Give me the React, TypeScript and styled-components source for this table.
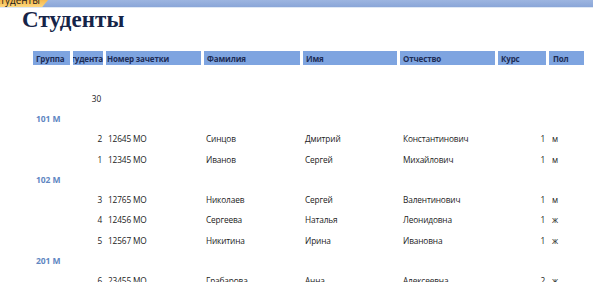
import React from "react";
import styled, { createGlobalStyle } from "styled-components";

const Global = createGlobalStyle`
  html, body { margin: 0; padding: 0; background: #ffffff; }
  body { font-family: "Open Sans", "Noto Sans", sans-serif; }
`;

const Page = styled.div`
  width: 593px;
  height: 282px;
  overflow: hidden;
  background: #ffffff;
  display: flex;
  flex-direction: column;
  & > * { flex-shrink: 0; }
`;

const TabStrip = styled.div`
  display: flex;
  height: 7px;
  background: linear-gradient(#9db5e0, #8aa6d8);
  border-bottom: 1px solid #dfe8f5;
`;

const Tab = styled.div`
  width: 48px;
  height: 7px;
  background: linear-gradient(#f7b84b, #fcd77e);
  clip-path: polygon(0 0, 100% 0, 88% 100%, 0 100%);
  display: flex;
  align-items: flex-end;
  justify-content: flex-end;
  overflow: hidden;
  padding-right: 8px;
  box-sizing: border-box;
`;

const TabText = styled.span`
  font-family: "Open Sans", sans-serif;
  font-size: 10px;
  line-height: 10px;
  color: #1b1b1b;
  white-space: nowrap;
  margin-bottom: 2px;
`;

const Title = styled.h1`
  margin: 0;
  padding: 1px 0 0 22px;
  font-family: "Liberation Serif", serif;
  font-weight: 700;
  font-size: 23px;
  line-height: 22px;
  color: #162448;
  letter-spacing: 0.1px;
`;

const Grid = styled.div`
  display: grid;
  grid-template-columns: 37px 30px 95px 96px 94px 95px 48px 35px;
  column-gap: 3px;
  padding-left: 33px;
`;

const HeaderRow = styled(Grid)`
  margin-top: 20px;
  height: 14px;
`;

const HeadCell = styled.div<{ $right?: boolean; $pad?: number }>`
  background: #7ea4e0;
  height: 14px;
  display: flex;
  align-items: center;
  justify-content: ${(p) => (p.$right ? "flex-end" : "flex-start")};
  overflow: hidden;
  padding-left: ${(p) => p.$pad ?? 3}px;
  box-sizing: border-box;
  font-size: 8px;
  font-weight: 700;
  color: #1d2c55;
  white-space: nowrap;
  letter-spacing: -0.15px;
`;

const Row = styled(Grid)`
  height: 20.3px;
  align-items: center;
`;

const Spacer = styled.div`
  height: 23px;
`;

const Cell = styled.div<{ $right?: boolean; $pad?: number }>`
  font-size: 8.3px;
  color: #222222;
  white-space: nowrap;
  letter-spacing: -0.15px;
  text-align: ${(p) => (p.$right ? "right" : "left")};
  padding-left: ${(p) => (p.$right ? 0 : p.$pad ?? 2)}px;
  padding-right: ${(p) => (p.$right ? p.$pad ?? 1 : 0)}px;
`;

const GroupLabel = styled.div`
  grid-column: 1 / span 3;
  padding-left: 3px;
  font-size: 8.5px;
  font-weight: 700;
  color: #6187c2;
  letter-spacing: -0.1px;
`;

type Student = {
  id: number;
  num: string;
  last: string;
  first: string;
  middle: string;
  course: number;
  sex: string;
};

const groups: { name: string; students: Student[] }[] = [
  {
    name: "101 М",
    students: [
      { id: 2, num: "12645 МО", last: "Синцов", first: "Дмитрий", middle: "Константинович", course: 1, sex: "м" },
      { id: 1, num: "12345 МО", last: "Иванов", first: "Сергей", middle: "Михайлович", course: 1, sex: "м" },
    ],
  },
  {
    name: "102 М",
    students: [
      { id: 3, num: "12765 МО", last: "Николаев", first: "Сергей", middle: "Валентинович", course: 1, sex: "м" },
      { id: 4, num: "12456 МО", last: "Сергеева", first: "Наталья", middle: "Леонидовна", course: 1, sex: "ж" },
      { id: 5, num: "12567 МО", last: "Никитина", first: "Ирина", middle: "Ивановна", course: 1, sex: "ж" },
    ],
  },
  {
    name: "201 М",
    students: [
      { id: 6, num: "23455 МО", last: "Грабарова", first: "Анна", middle: "Алексеевна", course: 2, sex: "ж" },
    ],
  },
];

export default function App() {
  return (
    <Page>
      <Global />
      <TabStrip>
        <Tab>
          <TabText>Студенты</TabText>
        </Tab>
      </TabStrip>
      <Title>Студенты</Title>
      <HeaderRow>
        <HeadCell>Группа</HeadCell>
        <HeadCell $right $pad={0}>Код студента</HeadCell>
        <HeadCell $pad={1}>Номер зачетки</HeadCell>
        <HeadCell>Фамилия</HeadCell>
        <HeadCell>Имя</HeadCell>
        <HeadCell>Отчество</HeadCell>
        <HeadCell>Курс</HeadCell>
        <HeadCell $pad={4}>Пол</HeadCell>
      </HeaderRow>
      <Spacer />
      <Row>
        <div />
        <Cell $right $pad={2}>30</Cell>
      </Row>
      {groups.map((g) => (
        <React.Fragment key={g.name}>
          <Row>
            <GroupLabel>{g.name}</GroupLabel>
          </Row>
          {g.students.map((s) => (
            <Row key={s.id}>
              <div />
              <Cell $right>{s.id}</Cell>
              <Cell>{s.num}</Cell>
              <Cell>{s.last}</Cell>
              <Cell>{s.first}</Cell>
              <Cell $pad={3}>{s.middle}</Cell>
              <Cell $right $pad={1}>{s.course}</Cell>
              <Cell $pad={3}>{s.sex}</Cell>
            </Row>
          ))}
        </React.Fragment>
      ))}
    </Page>
  );
}
